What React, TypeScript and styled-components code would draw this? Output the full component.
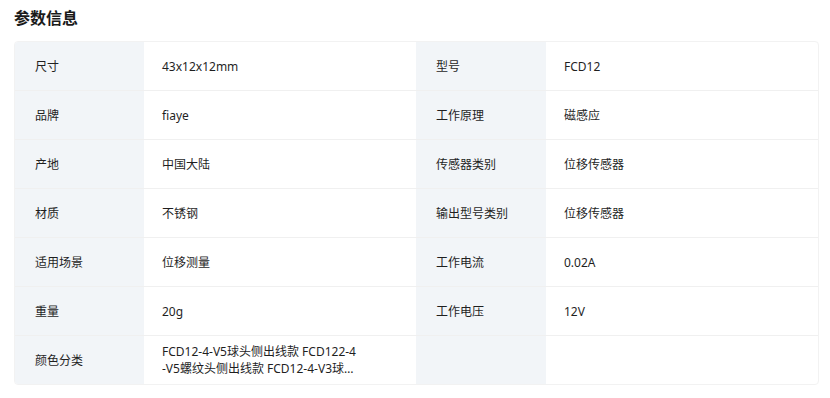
import React from 'react';
import styled, { createGlobalStyle } from 'styled-components';

const GlobalStyle = createGlobalStyle`
  body {
    margin: 0;
    background: #fff;
    font-family: "Noto Sans", "Noto Sans CJK SC", sans-serif;
    color: #1f1f1f;
  }
`;

const Section = styled.section`
  padding: 6px 11px 0 14px;
`;

const Title = styled.h2`
  margin: 0 0 13px;
  font-family: "Noto Sans CJK SC", sans-serif;
  font-size: 16px;
  font-weight: 700;
  line-height: 22px;
  color: #1a1a1a;
`;

const Table = styled.div`
  display: grid;
  grid-template-columns: 129px 1fr 130px 1fr;
  border: 1px solid #f2f2f2;
  border-radius: 4px;
  overflow: hidden;
`;

const Label = styled.div<{ $last?: boolean }>`
  display: flex;
  align-items: center;
  height: 48px;
  padding-left: 20px;
  background: #f2f5f8;
  font-size: 12px;
  border-bottom: ${(p) => (p.$last ? 'none' : '1px solid #f0f0f0')};
`;

const Value = styled.div<{ $last?: boolean }>`
  display: flex;
  align-items: center;
  height: 48px;
  padding: 0 18px;
  font-size: 12px;
  border-bottom: ${(p) => (p.$last ? 'none' : '1px solid #f0f0f0')};
`;

const Clamp = styled.span`
  display: -webkit-box;
  -webkit-line-clamp: 2;
  -webkit-box-orient: vertical;
  overflow: hidden;
  max-width: 197px;
  word-break: break-all;
  line-height: 17px;
`;

const rows: [string, string, string, string][] = [
  ['尺寸', '43x12x12mm', '型号', 'FCD12'],
  ['品牌', 'fiaye', '工作原理', '磁感应'],
  ['产地', '中国大陆', '传感器类别', '位移传感器'],
  ['材质', '不锈钢', '输出型号类别', '位移传感器'],
  ['适用场景', '位移测量', '工作电流', '0.02A'],
  ['重量', '20g', '工作电压', '12V'],
  ['颜色分类', 'FCD12-4-V5球头侧出线款 FCD122-4-V5螺纹头侧出线款 FCD12-4-V3球头侧出线款 FCD122-4-V3螺纹头侧出线款', '', ''],
];

const App = () => (
  <>
    <GlobalStyle />
    <Section>
      <Title>参数信息</Title>
      <Table>
        {rows.map(([k1, v1, k2, v2], i) => {
          const last = i === rows.length - 1;
          return (
            <React.Fragment key={k1}>
              <Label $last={last}>{k1}</Label>
              <Value $last={last}>{last ? <Clamp>{v1}</Clamp> : v1}</Value>
              <Label $last={last}>{k2}</Label>
              <Value $last={last}>{v2}</Value>
            </React.Fragment>
          );
        })}
      </Table>
    </Section>
  </>
);

export default App;
